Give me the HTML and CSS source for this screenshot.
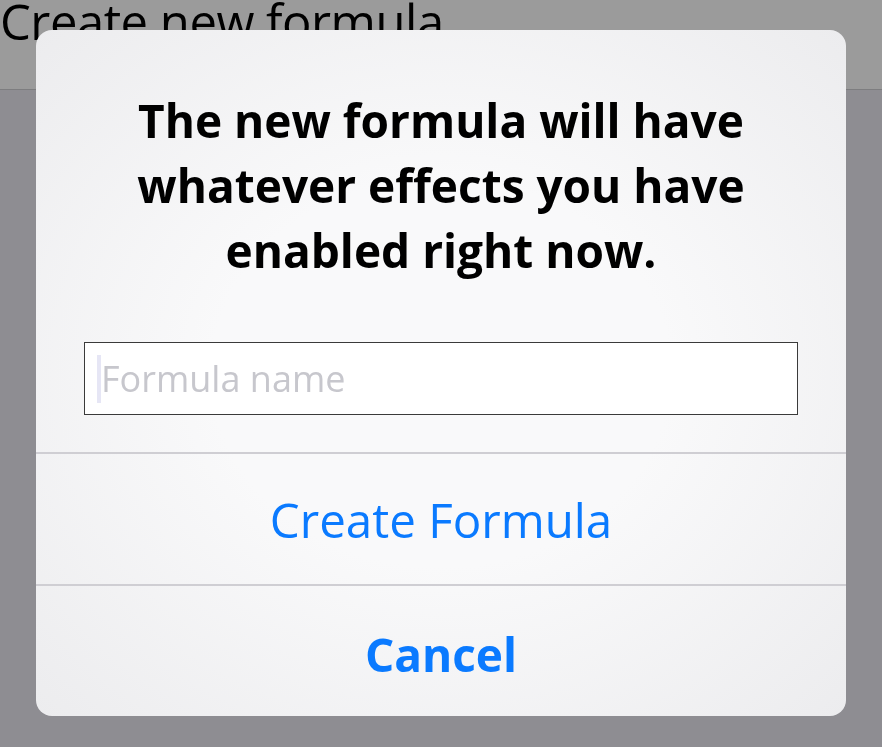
FILE: index.html
```html
<!DOCTYPE html>
<html lang="en">
<head>
    <meta charset="UTF-8">
    <title>Create new formula</title>
    <link rel="stylesheet" href="styles.css">
</head>
<body>
    <header class="topbar">
        <h1>Create new formula</h1>
    </header>

    <div class="overlay">
        <div class="alert">
            <p class="alert-title">The new formula will have whatever effects you have enabled right now.</p>
            <div class="field">
                <span class="caret"></span>
                <span class="placeholder">Formula name</span>
            </div>
            <button class="alert-btn">Create Formula</button>
            <button class="alert-btn cancel">Cancel</button>
        </div>
    </div>
</body>
</html>
```

FILE: styles.css
```css
body {
    margin: 0;
    background-color: #8e8d92;
    font-family: "Open Sans", "Noto Sans", sans-serif;
    height: 747px;
    overflow: hidden;
}
.topbar {
    height: 89px;
    background-color: #9b9b9b;
    border-bottom: 1px solid #7d7d7f;
}
.topbar h1 {
    margin: 0;
    font-weight: normal;
    font-size: 49px;
    line-height: 42px;
    color: #000000;
    letter-spacing: -0.5px;
}
.overlay {
    position: fixed;
    top: 0;
    left: 0;
    right: 0;
    bottom: 0;
    display: flex;
    justify-content: center;
    padding-top: 30px;
}
.alert {
    width: 810px;
    height: 686px;
    border-radius: 16px;
    overflow: hidden;
    background: radial-gradient(ellipse at center, #f9f9fa 40%, #ececee 100%);
    display: flex;
    flex-direction: column;
    text-align: center;
}
.alert-title {
    margin: 0;
    padding: 58px 80px 0;
    font-size: 46px;
    line-height: 65px;
    font-weight: 700;
    color: #000000;
}
.field {
    margin: 59px 48px 37px;
    height: 71px;
    border: 1px solid #3a3a3a;
    background-color: #ffffff;
    display: flex;
    align-items: center;
    padding-left: 12px;
}
.caret {
    width: 4px;
    height: 48px;
    background-color: #e6e6f5;
}
.placeholder {
    font-size: 36px;
    color: #c7c7cd;
}
.alert-btn {
    height: 132px;
    flex-shrink: 0;
    border: none;
    border-top: 2px solid #cfced3;
    background: transparent;
    font-family: inherit;
    font-size: 47.5px;
    color: #0a7aff;
    padding: 0;
}
.alert-btn.cancel {
    flex: 1;
    height: auto;
    padding-top: 5px;
    font-size: 46px;
    font-weight: 700;
}
```
